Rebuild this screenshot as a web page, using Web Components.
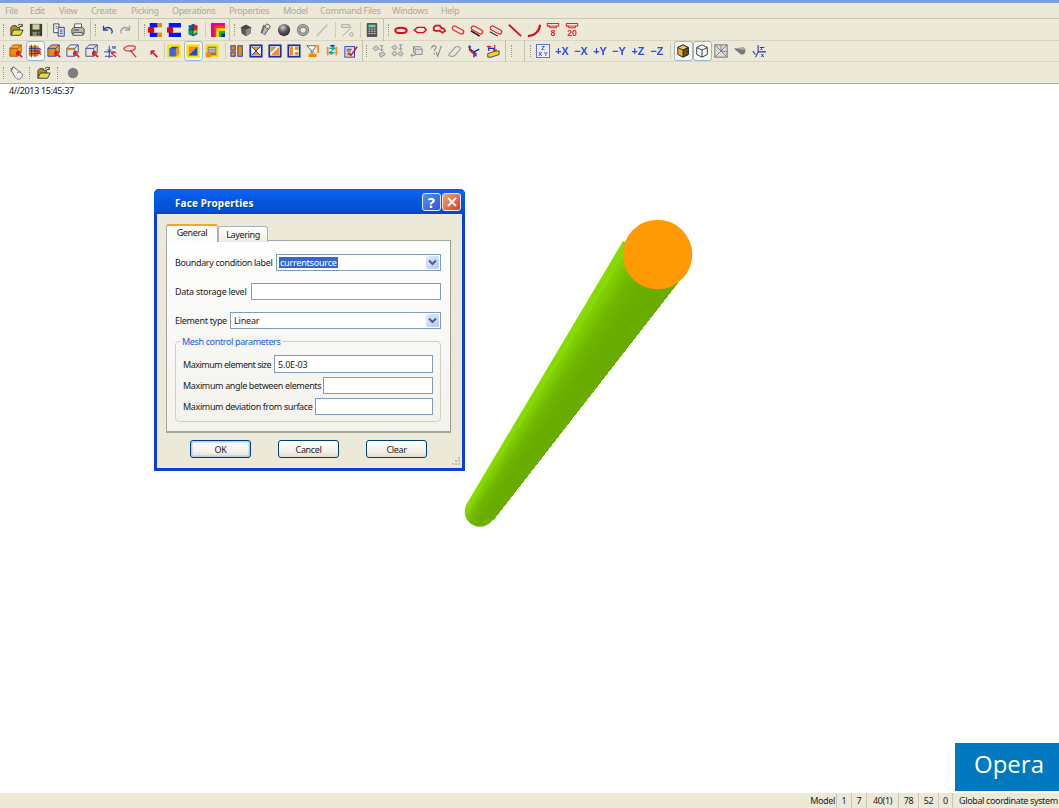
<!DOCTYPE html>
<html>
<head>
<meta charset="utf-8">
<title>Opera</title>
<style>
  html, body { margin: 0; height: 100%; overflow: hidden; background: #fff; }
  body { font: 9px "Noto Sans", "Liberation Sans", sans-serif; letter-spacing: -.36px; color: #222; }
</style>
</head>
<body>
<app-shell>
  <menu-bar items="File:5 Edit:30 View:59 Create:91 Picking:131 Operations:172 Properties:229 Model:283 Command_Files:320 Windows:392 Help:441"></menu-bar>
  <tool-bar items="grip:7 open save sep:4 copy print div:5 grip:5.5 undo redo div:5 grip:5 mag1 mag2 mesh sep:5.5 rainbow div:4 grip:5.5 cube cyl sphere torus line sep:6 percent sep:6 calc div:3 grip:7 r1 r2 r3 r4 r5 r6 r7 r8 r9 r10"></tool-bar>
  <tool-bar items="grip:6.5 b1 b2! b3 b4 b5 b6 b7 gap:4 b8 sep:2 y1 y2! y3 sep:6 o1 o2 o3 o4 o5 o6 o7 div:2 grip:7 g1 g2 g3 g4 g5 a1 a2 div:5 grip:6 gap:7 div:6 grip:7 xyz px mx py my pz mz sep:7 solid! wire! gmesh gcone axes"></tool-bar>
  <tool-bar items="grip:7 mouse grip:8.5 open grip:10 dot" last></tool-bar>
  <main-view>
    <time-stamp>4//2013 15:45:37</time-stamp>
    <tube-model></tube-model>
    <face-dialog></face-dialog>
    <opera-logo></opera-logo>
  </main-view>
  <status-bar>
    <status-cell w="28">Model</status-cell>
    <status-cell w="15">1</status-cell>
    <status-cell w="15">7</status-cell>
    <status-cell w="32">40(1)</status-cell>
    <status-cell w="20">78</status-cell>
    <status-cell w="20">52</status-cell>
    <status-cell w="14">0</status-cell>
    <status-cell w="106" last>Global coordinate system</status-cell>
  </status-bar>
</app-shell>

<script>
// caja = cubo de alambre azul, usado por varios iconos
const wire = (c = '#2a3f9f') => `<path d="M1 5h9v9H1zM1 5l4-4h9v9l-4 4M10 5l4-4" fill="none" stroke="${c}"/>`
const arrow = `<path d="M15 15 9 9M9 9v4M9 9h4" fill="none" stroke="#e8101c" stroke-width="1.8"/>`
const orangeBox = '<path d="M1 5h9v9H1z" fill="#f08c00"/><path d="M1 5l4-4h9v9l-4 4V5z" fill="#f5a528"/>'
const capsule = (extra = '') => `<rect x="1" y="5.5" width="14" height="5" rx="2.5" transform="rotate(28 8 8)" fill="none" stroke="#e8202a" stroke-width="1.3"/>${extra}`
const yellow = inner => `<rect x="1" y="1" width="14" height="14" fill="#ffe600" stroke="#f5e000"/>${inner}`
const blueFrame = inner => `<rect x="1.5" y="1.5" width="13" height="13" fill="#fff" stroke="#1430b0" stroke-width="2"/>${inner}`
const axis = t => `<text x="8" y="12.5" text-anchor="middle" font-family="Liberation Sans,sans-serif" font-weight="700" font-size="12.5" letter-spacing="0" fill="#3048f0">${t}</text>`
const ringTop = '<path d="M1.500 .5h13v3h-2l-1 2H4.500l-1-2h-2z" fill="none" stroke="#e8202a" stroke-width="1.200"/><path d="M1.500 3.500h11" stroke="#e8202a"/>'
const num = t => `<text x="8" y="14.500" text-anchor="middle" font-family="Liberation Sans,sans-serif" font-size="10" letter-spacing="0" fill="#e8202a">${t}</text>`

const ICONS = {
  open: '<path d="M1 14V5l2-2h4l1 2h3v3" fill="#a89028" stroke="#333"/><path d="M1 14l3-6h11l-3 6z" fill="#e8dc48" stroke="#333"/><path d="M9 3c2-2 4-2 5 0M14 1v3h-3" fill="none" stroke="#222"/>',
  save: '<rect x="1" y="1" width="14" height="14" fill="#3e3e28"/><rect x="4" y="1.500" width="8" height="6" fill="#d0d0a8"/><rect x="4" y="10" width="8" height="5" fill="#8a8a78"/><rect x="9" y="11" width="2" height="3" fill="#333"/>',
  copy: '<path d="M2 1h6v10H2z" fill="#fff" stroke="#334"/><path d="M7 5h7v10H7z" fill="#dfe2f4" stroke="#2a3470"/><path d="M4 4h2M4 6h2M9 8h3M9 10h3M9 12h3" stroke="#447"/>',
  print: '<path d="M4 1h8v5H4z" fill="#fff" stroke="#555"/><path d="M1 7l2-2h10l2 2v5H1z" fill="#b8b8ae" stroke="#444"/><path d="M3 11h10l1 3H2z" fill="#eee" stroke="#444"/><path d="M3 8h6" stroke="#333"/>',
  undo: '<path d="M4 3v5h5M4 8c2-4 8-4 10 1 0 1 0 2-1 3" fill="none" stroke="#2848a8" stroke-width="1.500"/>',
  redo: '<path d="M12 3v5H7M12 8C10 4 4 4 2 9c0 1 0 2 1 3" fill="none" stroke="#a0a0a0" stroke-width="1.500"/>',
  mag1: '<path d="M2 0h9v5H6v6h5v5H2z" fill="#0818e8"/><rect x="0" y="5" width="7" height="6" fill="#e80010"/><rect x="11" y="0" width="5" height="5" fill="#f08c00"/><rect x="11" y="11" width="5" height="5" fill="#f08c00"/>',
  mag2: '<path d="M2 0h14v5H6v6h10v5H2z" fill="#0818e8"/><rect x="0" y="5" width="7" height="6" fill="#e80010"/>',
  mesh: '<path d="M3 3l5-2 5 2v10l-5 2-5-2z" fill="#0a70c0"/><path d="M8 1l5 2v4l-5 1z" fill="#e02020"/><path d="M8 8l5-1v3l-5 3z" fill="#f0c000"/><path d="M3 8l5 0v5l-5-2z" fill="#18a040"/><path d="M3 3l5 5M8 1v14M3 8h10" stroke="#103018" stroke-width=".8"/>',
  rainbow: '<rect x="0" y="0" width="16" height="16" fill="#e8009c"/><rect x="4" y="3" width="12" height="13" fill="#f04010"/><rect x="6" y="6" width="10" height="10" fill="#ffe000"/><rect x="9" y="9" width="7" height="7" fill="#00c000"/><rect x="12" y="12" width="4" height="4" fill="#0020e0"/>',
  cube: '<path d="M2 5l6-3 6 3-1 7-5 3-5-3z" fill="#5a5a5a"/><path d="M8 7l6-2-1 7-5 3z" fill="#8a8a8a"/><path d="M2 5l6-3 6 3-6 2z" fill="#444"/>',
  cyl: '<path d="M6 2l7 4-5 8-5-3z" fill="#666"/><path d="M8 3l4 3-5 7-2-1z" fill="#bbb"/><ellipse cx="11" cy="4" rx="3" ry="2.500" transform="rotate(30 11 4)" fill="#e0e0e0" stroke="#555"/>',
  sphere: '<defs><radialGradient id="s" cx=".4" cy=".3" r=".8"><stop offset="0" stop-color="#ccc"/><stop offset=".5" stop-color="#555"/><stop offset="1" stop-color="#222"/></radialGradient></defs><circle cx="8" cy="8" r="7" fill="url(#s)"/>',
  torus: '<circle cx="8" cy="8" r="5" fill="none" stroke="#777" stroke-width="4"/><circle cx="8" cy="8" r="5" fill="none" stroke="#bbb" stroke-width="1.500"/>',
  line: '<path d="M2 15 14 2" stroke="#c4c2b6" stroke-width="2"/>',
  percent: '<path d="M2 2h9v3H2zM3 15 13 5" fill="none" stroke="#999"/><rect x="11" y="11" width="4" height="4" rx="2" fill="none" stroke="#999"/>',
  calc: '<rect x="2" y="0" width="12" height="16" rx="1" fill="#555"/><rect x="4" y="2" width="8" height="3" fill="#60d0c0"/><path d="M4 7h2M7 7h2M10 7h2M4 9.500h2M7 9.500h2M10 9.500h2M4 12h2M7 12h2M10 12h2" stroke="#ddd"/>',
  r1: '<ellipse cx="8" cy="8.500" rx="6.500" ry="3" fill="none" stroke="#e00c1c" stroke-width="2.400"/>',
  r2: '<path d="M1.500 8 5 5h8l2 3-3 3H5z" fill="none" stroke="#e00c1c" stroke-width="1.700"/>',
  r3: '<path d="M2 8V5l2-2h5l2 3h2l2 3-3 2-3-2H5L4 9z" fill="none" stroke="#e00c1c" stroke-width="2"/>',
  r4: capsule(),
  r5: capsule('<path d="M1 9l10 6" stroke="#111" stroke-width="1.600"/>'),
  r6: capsule('<path d="M1 10l9 5" stroke="#222" stroke-width="1.300"/>'),
  r7: '<path d="M1 2l14 13" stroke="#d8101c" stroke-width="2"/>',
  r8: '<path d="M1 15c7 0 13-5 14-13" fill="none" stroke="#d8101c" stroke-width="2.400"/>',
  r9: ringTop + num('8'),
  r10: ringTop + num('20'),
  b1: orangeBox + wire('#a05010') + arrow,
  b2: '<rect x="1" y="2" width="11" height="12" fill="#f08c00"/><path d="M1 5h13M1 8h13M1 11h13M4 1v14M8 1v14" stroke="#1830a0"/><path d="M15 12 9 8M15 6 9 8M15 9H9" stroke="#f01020" stroke-width="1.400"/>',
  b3: orangeBox + wire('#1a40b0') + arrow,
  b4: wire() + '<path d="M0 6h10" stroke="#f08c00" stroke-width="2"/>' + arrow,
  b5: wire() + arrow,
  b6: '<path d="M0 9h13M1 14h9M6 2v14M4 6l2 3 2-3" fill="none" stroke="#1a38c0"/><text x="9" y="6" font-family="Liberation Sans,sans-serif" font-size="6" fill="#1a38c0">w</text><path d="M14 15 8 10M14 10H8" stroke="#e8101c" stroke-width="1.300"/>',
  b7: '<path d="M1 5c3-3 9-4 13-2 1 3-3 5-7 5-3 0-6-1-6-3z" fill="none" stroke="#e85060" stroke-width="1.700"/><path d="M15 15 8 7" stroke="#e8101c" stroke-width="1.300"/>',
  b8: '<path d="M13 15 6 8M6 8v4M6 8h4" fill="none" stroke="#e8101c" stroke-width="1.900"/>',
  y1: yellow('<path d="M3 5l3-2h7v9l-3 2H3z" fill="#1840d0"/><path d="M3 5h7v9H3z" fill="#3868e8"/><path d="M10 5l3-2v9l-3 2z" fill="#f09020"/>'),
  y2: yellow('<path d="M3 3h10v10H3z" fill="#f09020"/><path d="M13 3v10H3z" fill="#2848c8"/>'),
  y3: yellow('<rect x="3" y="3" width="10" height="10" fill="#777"/><path d="M4 5h8M4 7h8M4 9h8" stroke="#ddd"/><rect x="1" y="10" width="6" height="5" fill="#f08c00"/>'),
  o1: '<rect x="1" y="2" width="5" height="5" fill="#f08c00" stroke="#1430b0"/><rect x="1" y="9" width="5" height="5" fill="#f08c00" stroke="#1430b0"/><rect x="9" y="2" width="5" height="12" fill="#f08c00" stroke="#1430b0"/>',
  o2: blueFrame('<path d="M3 3l5 5 5-5zM3 13l5-5 5 5z" fill="#f09020"/><path d="M3 3l10 10M13 3 3 13" stroke="#1430b0"/>'),
  o3: blueFrame('<path d="M3 13 13 3v10z" fill="#f09020"/><path d="M3 3h7L3 10z" fill="#f09020"/>'),
  o4: blueFrame('<rect x="3" y="3" width="4" height="10" fill="#f09020"/><rect x="9" y="3" width="4" height="4" fill="#f09020"/><rect x="9" y="9" width="4" height="4" fill="#f09020"/>'),
  o5: '<path d="M1 2h11L8 7v3H6V7z" fill="#fff" stroke="#555"/><rect x="3" y="11" width="9" height="4" fill="#f08c00"/><rect x="13" y="1" width="2" height="9" fill="#f08c00"/>',
  o6: '<path d="M2 3h2v10H2zM12 3h2v10h-2z" fill="#f09020"/><path d="M5 5h6M8 3l3 2-3 2M11 10H5M8 8l-3 2 3 2" fill="none" stroke="#10a0c0" stroke-width="1.500"/><path d="M6 1h5v2H6z" fill="#1a38c0"/>',
  o7: '<rect x="1" y="3" width="11" height="12" fill="#dfe2f4" stroke="#1430b0"/><path d="M3 6h6M3 8h5" stroke="#333"/><rect x="3" y="10" width="5" height="3" fill="#f08c00"/><path d="M5 10l3 3 7-10" fill="none" stroke="#e8101c" stroke-width="1.800"/>',
  g1: '<path d="M1 5l4-3 3 3-4 3zM8 11l5-2 2 3-5 3zM9 2h4M11 2v6M9 6l2 2 2-2" fill="#ccc" stroke="#888"/>',
  g2: '<path d="M1 4l3-3 3 3-3 3zM1 11l3-3 3 3-3 3zM8 11l3-3 3 3-3 3zM9 1h4M11 1v6M9 5l2 2 2-2" fill="#ccc" stroke="#888"/>',
  g3: '<path d="M4 3h8l2 3v6H6l-2-3zM4 3v6M6 12V6h8M6 6 4 3M1 13h5M3 11l-2 2 2 2" fill="#ddd" stroke="#888"/>',
  g4: '<path d="M3 5c0-4 5-4 5-1 0 2-2 2-2 4M6 10v2M8 9l2 5 4-12" fill="none" stroke="#909090" stroke-width="1.300"/>',
  g5: '<path d="M1 12l7-8c2-2 7-1 6 2l-6 7c-2 2-8 1-7-1z" fill="#e8e8e0" stroke="#999" stroke-width="1.300"/>',
  a1: '<path d="M3 2v4l5 3v6M8 9l6-3M4 6l7 6" fill="none" stroke="#1a30d8" stroke-width="1.700"/><path d="M3 7l8 7" stroke="#e8101c" stroke-width="1.700"/><path d="M3 1 1 4h4z" fill="#1a30d8"/>',
  a2: '<path d="M3 6V2M1 3h5M10 1v7M8 6l2 3 2-3" fill="none" stroke="#e8101c" stroke-width="1.300"/><path d="M3 5h7M3 5v3" stroke="#1a30d8" stroke-width="1.500"/><path d="M2 11l9-3h4v4l-9 3H2z" fill="#ffd800" stroke="#1a30a0"/>',
  xyz: '<rect x=".5" y=".5" width="15" height="15" fill="#eef0ff" stroke="#5060e0"/><text x="8" y="7" text-anchor="middle" font-family="Liberation Sans,sans-serif" font-size="7" letter-spacing="0" fill="#3848d8">Z</text><text x="8" y="14" text-anchor="middle" font-family="Liberation Sans,sans-serif" font-size="7" letter-spacing="0" fill="#3848d8">X Y</text>',
  px: axis('+X'), mx: axis('\u2212X'), py: axis('+Y'), my: axis('\u2212Y'), pz: axis('+Z'), mz: axis('\u2212Z'),
  solid: '<path d="M2 4l6-3 6 3v8l-6 3-6-3z" fill="#e8b030" stroke="#222"/><path d="M2 4l6 3 6-3-6-3z" fill="#f0c860" stroke="#222"/><path d="M8 7v8l6-3V4z" fill="#705018" stroke="#222"/>',
  wire: '<path d="M2 4l6-3 6 3v8l-6 3-6-3zM2 4l6 3 6-3M8 7v8" fill="#fff" stroke="#222"/>',
  gmesh: '<rect x="1" y="1" width="14" height="14" fill="#ddd" stroke="#666"/><path d="M1 1l7 7 7-7M1 15l7-7 7 7M8 8l7 1M8 1v7" fill="none" stroke="#777"/>',
  gcone: '<path d="M1 5l10-1c3 0 4 3 3 5-1 3-3 3-5 3z" fill="#777"/><path d="M1 5l10-1c2 0 3 1 3 3z" fill="#aaa"/>',
  axes: '<path d="M7 9h9M7 9V1M7 9l-3 6M1 8l3 4M9 4h5" fill="none" stroke="#1a30c8" stroke-width="1.200"/><text x="9" y="7" font-family="Liberation Sans,sans-serif" font-size="7" fill="#e8101c">z</text><text x="10" y="15" font-family="Liberation Sans,sans-serif" font-size="7" fill="#1a30c8">x</text>',
  mouse: '<path d="M1 3l3-2 10 8c1 3-1 6-4 6-2 0-3-1-4-2L2 6z" fill="#eee" stroke="#666"/><path d="M4 1 1 6" stroke="#555"/><path d="M8 8l4-2" stroke="#777"/>',
  dot: '<circle cx="8" cy="8" r="6" fill="#7e7e7e"/>'
}

const BASE = ':host{display:block;box-sizing:border-box}'

class AppShell extends HTMLElement {
  constructor () {
    super()
    this.attachShadow({ mode: 'open' })
    this.shadowRoot.innerHTML = `
      <style>:host{display:flex;flex-direction:column;height:100vh;border-top:3px solid #7f9fdc;box-sizing:border-box}</style>
      <slot></slot>`
  }
}

class MenuBar extends HTMLElement {
  constructor () {
    super()
    this.attachShadow({ mode: 'open' })
    // cada entrada lleva la x donde empieza, el ancho sale de la resta
    const entries = this.getAttribute('items').split(' ').map(it => it.split(':'))
    const names = entries.map(([n, x], i) => {
      const next = entries[i + 1] ? Number(entries[i + 1][1]) : Number(x) + 30
      return `<span style="width:${next - Number(x)}px">${n.replace('_', ' ')}</span>`
    }).join('')
    this.shadowRoot.innerHTML = `
      <style>${BASE}
        :host{height:16px;background:#ece9d8;border-bottom:1px solid #c9c6b4;display:flex;align-items:center;padding-left:5px;color:#aca899;white-space:nowrap}
        span{flex:none}
      </style>${names}`
  }
}

class ToolBar extends HTMLElement {
  constructor () {
    super()
    this.attachShadow({ mode: 'open' })
    const parts = this.getAttribute('items').split(' ').map(tok => {
      const [kind, size] = tok.split(':')
      if (kind === 'grip') return `<i class="grip" style="width:${size}px"></i>`
      if (kind === 'sep') return `<i class="sep" style="width:${size}px"></i>`
      if (kind === 'div') return `<i class="div" style="width:${size}px"></i>`
      if (kind === 'gap') return `<i style="width:${size}px"></i>`
      const on = kind.endsWith('!')
      const name = on ? kind.slice(0, -1) : kind
      return `<b class="${on ? 'on' : ''}"><svg viewBox="0 0 16 16" width="14" height="14">${ICONS[name]}</svg></b>`
    }).join('')
    this.shadowRoot.innerHTML = `
      <style>${BASE}
        :host{height:21.500px;padding-top:1px;background:#ece9d8;display:flex;align-items:center;border-bottom:1px solid #d8d5c4}
        :host([last]){border-bottom:1px solid #b0ad9c;height:22px}
        i{display:block;height:20px;flex:none;position:relative}
        b{display:flex;flex:none;width:19px;height:20px;align-items:center;justify-content:center;box-sizing:border-box}
        b.on{background:#f8f8f2;border:1px solid #9db6d4;border-radius:3px}
        svg{display:block;filter:blur(.3px);overflow:visible}
        .grip::before{content:"";position:absolute;left:3px;top:4px;bottom:4px;border-left:1px dotted #9a9888}
        .sep::before{content:"";position:absolute;left:50%;top:2px;bottom:2px;border-left:1px solid #cfccba}
        .div::before{content:"";position:absolute;left:50%;top:-1px;bottom:-1px;border-left:1px solid #c4c1b0}
      </style>${parts}`
  }
}

class MainView extends HTMLElement {
  constructor () {
    super()
    this.attachShadow({ mode: 'open' })
    this.shadowRoot.innerHTML = `
      <style>${BASE}:host{flex:1;position:relative;background:#fff;overflow:hidden}</style>
      <slot></slot>`
  }
}

class TimeStamp extends HTMLElement {
  constructor () {
    super()
    this.attachShadow({ mode: 'open' })
    this.shadowRoot.innerHTML = `
      <style>${BASE}:host{padding:1px 0 0 9px;color:#111;line-height:12px}</style>
      <slot></slot>`
  }
}

// el tubo va en un lienzo libre, por eso es absolute
class TubeModel extends HTMLElement {
  constructor () {
    super()
    this.attachShadow({ mode: 'open' })
    const mix = (a, b, t) => a.map((v, i) => Math.round(v + (b[i] - v) * t))
    const ramp = [[0, [141, 224, 0]], [0.07, [132, 214, 0]], [0.1, [140, 222, 6]], [0.13, [130, 210, 0]], [0.38, [112, 182, 0]], [0.65, [106, 172, 0]], [1, [106, 172, 0]]]
    const colorAt = t => {
      let i = 0
      while (i < ramp.length - 2 && t > ramp[i + 1][0]) i++
      const [t0, c0] = ramp[i]
      const [t1, c1] = ramp[i + 1]
      return `rgb(${mix(c0, c1, (t - t0) / (t1 - t0)).join(',')})`
    }
    // franjas en perspectiva: el tubo se ensancha hacia arriba.
    // Cada una llega hasta el borde derecho y la siguiente la pisa, asi no quedan costuras
    const N = 40
    const top = [[623, 241], [682, 277]]
    const bot = [[466, 505], [493, 520]]
    const lerp = (p, t) => [p[0][0] + (p[1][0] - p[0][0]) * t, p[0][1] + (p[1][1] - p[0][1]) * t]
    let strips = ''
    for (let i = 0; i < N; i++) {
      const a = i / N
      const c = colorAt((i + 0.5) / N)
      strips += `<polygon points="${[lerp(top, a), top[1], bot[1], lerp(bot, a)].map(p => p.join(',')).join(' ')}" fill="${c}"/>`
    }
    this.shadowRoot.innerHTML = `
      <style>:host{position:absolute;left:0;top:0;display:block}svg{display:block}</style>
      <svg width="1059" height="709" viewBox="0 84 1059 709">
        <defs>
          <linearGradient id="c" gradientUnits="userSpaceOnUse" x1="466" y1="505" x2="493" y2="520">
            <stop offset="0" stop-color="#8de000"/>
            <stop offset=".13" stop-color="#82d200"/>
            <stop offset=".38" stop-color="#70b600"/>
            <stop offset=".65" stop-color="#6aac00"/>
            <stop offset="1" stop-color="#72ba00"/>
          </linearGradient>
        </defs>
        <circle cx="480" cy="511.500" r="15.300" fill="url(#c)"/>
        ${strips}
        <circle cx="657.500" cy="254.500" r="34.800" fill="#ff9a05"/>
      </svg>`
  }
}

class FaceDialog extends HTMLElement {
  constructor () {
    super()
    this.attachShadow({ mode: 'open' })
    // ancho de etiqueta fijado a mano para que los campos empiecen donde en la captura
    const row = (text, w, inner, extra = '') => `<div class="row"><label style="width:${w}px;${extra}">${text}</label><div class="field">${inner}</div></div>`
    const drop = `<div class="drop">${FaceDialog.chevron}</div>`
    this.shadowRoot.innerHTML = `
      <style>
        :host{position:absolute;left:154px;top:105px;width:311px;height:282px;box-sizing:border-box;display:flex;flex-direction:column;
          background:#ece9d8;border:3px solid #0a3fd8;border-top:0;border-radius:5px 5px 0 0}
        .title{height:25px;margin:0 -3px;background:linear-gradient(#0a5ae6 0,#0a62ee 10%,#0454dc 55%,#0350d8 85%,#0a44c0 100%);border-radius:5px 5px 0 0;
          display:flex;align-items:center;padding:2px 4px 0 21px;box-sizing:border-box;color:#fff;font-weight:700;font-size:10px;text-shadow:1px 1px 0 #0a3aa0;letter-spacing:.1px}
        .title span{flex:1}
        .cap{width:19px;height:18px;border:1px solid #e8eef8;border-radius:3px;margin:-2px 0 0 1px;box-sizing:border-box;display:flex;align-items:center;justify-content:center;text-shadow:none}
        .help{background:linear-gradient(135deg,#5c8cf0,#2858d0);font-size:15px}
        .close{background:linear-gradient(135deg,#f0a080,#d84020)}
        .body{flex:1;padding:10px 11px 0 9px;display:flex;flex-direction:column}
        .tabs{display:flex;height:17px;position:relative;z-index:1}
        .tab{display:flex;align-items:center;justify-content:center;box-sizing:border-box;border:1px solid #a5b2bd;border-bottom:0;border-radius:3px 3px 0 0}
        .tab.on{width:52px;height:18px;background:#fbfbf8;border-top:2px solid #f5a623;padding-bottom:3px}
        .tab.off{width:50px;height:16px;margin-top:2px;background:linear-gradient(#fff,#ecebe3)}
        .panel{box-sizing:border-box;height:193px;margin-top:-1px;background:linear-gradient(#fefefe,#f3f2ec);border:1px solid #a5a89e;border-right-color:#9a9d90;border-bottom-width:2px;padding:13px 9px 0 8px}
        .row{display:flex;align-items:center;height:17px;margin-bottom:12px;white-space:nowrap}
        .row label{margin-right:3px;flex:none}
        .field{flex:1;height:17px;box-sizing:border-box;background:#fff;border:1px solid #7f9db9;display:flex;align-items:center;padding:0 3px;position:relative;letter-spacing:-.2px}
        .sel{background:#3369c8;color:#fff;padding:0 1px;line-height:11px;margin-left:-1px}
        .drop{position:absolute;right:1px;top:1px;bottom:1px;width:13px;background:linear-gradient(135deg,#e0e8fc,#b8c9f5);border-radius:2px;display:flex;align-items:center;justify-content:center}
        .group{margin-top:4px;height:81px;box-sizing:border-box;position:relative;border:1px solid #d0d0bf;border-radius:4px;padding:13px 7px 0 7px}
        .group em{position:absolute;left:4px;top:-6px;padding:0 2px;background:#f5f4ef;color:#1c5cd8;font-style:normal;line-height:12px}
        .group .row{margin-bottom:3px;height:18px}
        .group .field{height:18px}
        .group .row:nth-of-type(3) .field,.group .row:nth-of-type(2) .field{height:17px}
        .btns{display:flex;margin:7px 0 0 24px;gap:27px}
        .btn{width:61px;height:18px;box-sizing:border-box;border:1px solid #003c74;border-radius:3px;background:linear-gradient(#fff,#f2f0e6 70%,#e0ddd0);display:flex;align-items:center;justify-content:center}
        .btn.def{box-shadow:inset 0 0 0 1.500px #b6cdec}
        .grip{position:absolute;right:1px;bottom:1px}
      </style>
      <div class="title">
        <span>Face Properties</span>
        <div class="cap help">?</div>
        <div class="cap close"><svg width="12" height="12" viewBox="0 0 12 12"><path d="M2 2l8 8M10 2l-8 8" stroke="#fff" stroke-width="2"/></svg></div>
      </div>
      <div class="body">
        <div class="tabs"><div class="tab on">General</div><div class="tab off">Layering</div></div>
        <div class="panel">
          ${row('Boundary condition label', 98, `<span class="sel">currentsource</span>${drop}`)}
          ${row('Data storage level', 73, '', 'letter-spacing:-.25px')}
          ${row('Element type', 52, `Linear${drop}`, 'letter-spacing:-.3px')}
          <div class="group">
            <em>Mesh control parameters</em>
            ${row('Maximum element size', 88, '5.0E-03', 'letter-spacing:-.5px')}
            ${row('Maximum angle between elements', 137, '')}
            ${row('Maximum deviation from surface', 129, '')}
          </div>
        </div>
        <div class="btns"><div class="btn def">OK</div><div class="btn">Cancel</div><div class="btn">Clear</div></div>
      </div>
      <svg class="grip" width="11" height="11" viewBox="0 0 11 11" fill="#c2bfae"><path d="M8 1h2v2H8zM5 4h2v2H5zM8 4h2v2H8zM2 7h2v2H2zM5 7h2v2H5zM8 7h2v2H8z"/></svg>`
  }

  static chevron = '<svg width="9" height="7" viewBox="0 0 9 7"><path d="M1 1.500l3.500 3.500L8 1.500" fill="none" stroke="#4d6185" stroke-width="2"/></svg>'
}

class OperaLogo extends HTMLElement {
  constructor () {
    super()
    this.attachShadow({ mode: 'open' })
    this.shadowRoot.innerHTML = `
      <style>
        :host{position:absolute;right:0;bottom:2px;width:104px;height:48px;box-sizing:border-box;background:#0079c1;color:#fff;
          display:flex;align-items:center;padding:0 0 8px 19px;font:24px "Open Sans",sans-serif;letter-spacing:0}
      </style>Opera`
  }
}

class StatusBar extends HTMLElement {
  constructor () {
    super()
    this.attachShadow({ mode: 'open' })
    this.shadowRoot.innerHTML = `
      <style>${BASE}:host{height:15px;background:#ece9d8;display:flex;justify-content:flex-end;color:#222}</style>
      <slot></slot>`
  }
}

class StatusCell extends HTMLElement {
  constructor () {
    super()
    this.attachShadow({ mode: 'open' })
    this.shadowRoot.innerHTML = `
      <style>${BASE}
        :host{height:15px;display:flex;align-items:center;justify-content:center;white-space:nowrap;border-right:1px solid #cbc8b6;width:${this.getAttribute('w')}px}
        :host([last]){border-right:0;justify-content:flex-start;padding-left:6px}
      </style><slot></slot>`
  }
}

customElements.define('app-shell', AppShell)
customElements.define('menu-bar', MenuBar)
customElements.define('tool-bar', ToolBar)
customElements.define('main-view', MainView)
customElements.define('time-stamp', TimeStamp)
customElements.define('tube-model', TubeModel)
customElements.define('face-dialog', FaceDialog)
customElements.define('opera-logo', OperaLogo)
customElements.define('status-bar', StatusBar)
customElements.define('status-cell', StatusCell)
</script>
</body>
</html>
